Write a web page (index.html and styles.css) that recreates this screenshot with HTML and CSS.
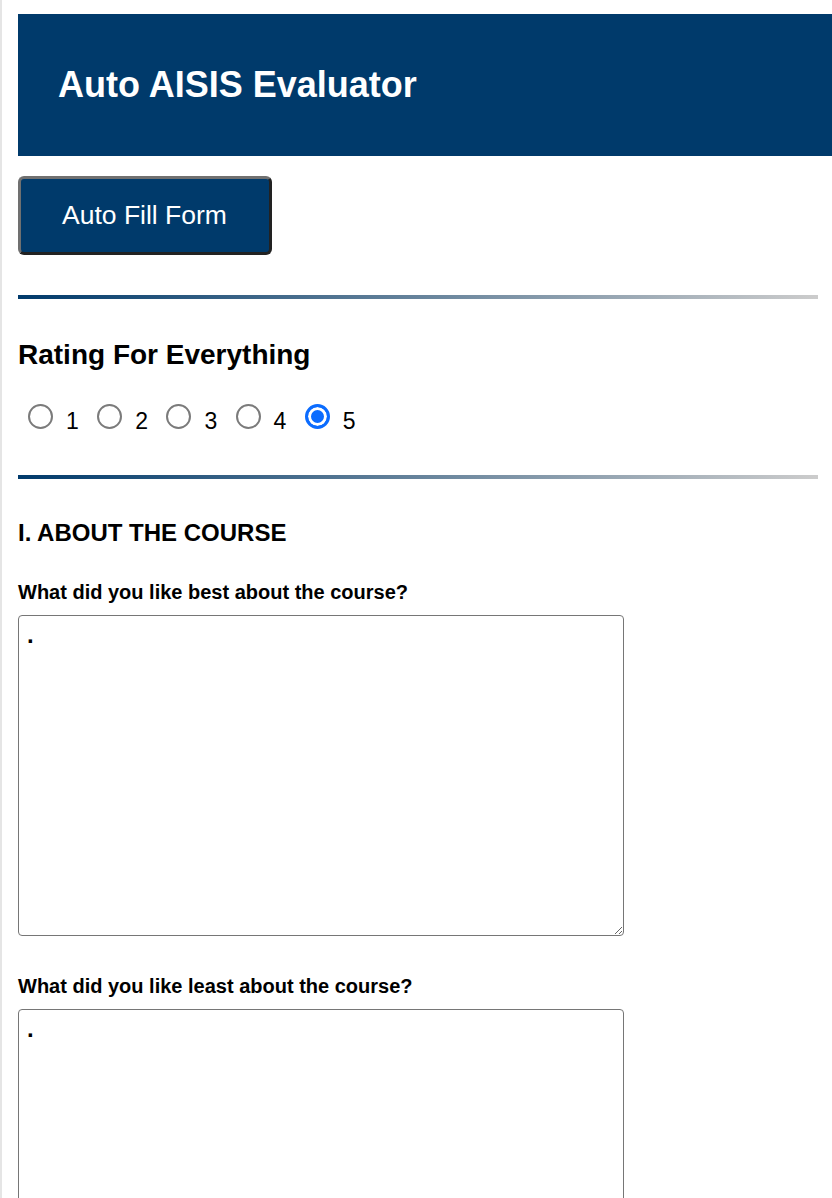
FILE: index.html
```html
<!DOCTYPE html>
<html lang="en">
  <head>
    <meta charset="UTF-8" />
    <meta name="viewport" content="width=device-width, initial-scale=1.0" />
    <title>Auto AISIS Evaluator</title>
    <link rel="stylesheet" href="styles.css">
  </head>
  <body>
    <div class="page">
      <header class="banner">
        <h1>Auto AISIS Evaluator</h1>
      </header>

      <button class="fill-button" type="button">Auto Fill Form</button>

      <hr class="divider" />

      <h2 class="rating-title">Rating For Everything</h2>
      <div class="rating-options">
        <input type="radio" name="rating" id="rate-1" value="1" /><label for="rate-1">1</label>
        <input type="radio" name="rating" id="rate-2" value="2" /><label for="rate-2">2</label>
        <input type="radio" name="rating" id="rate-3" value="3" /><label for="rate-3">3</label>
        <input type="radio" name="rating" id="rate-4" value="4" /><label for="rate-4">4</label>
        <input type="radio" name="rating" id="rate-5" value="5" checked /><label for="rate-5">5</label>
      </div>

      <hr class="divider" />

      <h3 class="section-title">I. ABOUT THE COURSE</h3>

      <label class="question" for="best">What did you like best about the course?</label>
      <textarea class="answer" id="best">.</textarea>

      <label class="question" for="least">What did you like least about the course?</label>
      <textarea class="answer" id="least">.</textarea>
    </div>
  </body>
</html>
```

FILE: styles.css
```css
html {
  overflow-x: hidden;
}
body {
  margin: 0;
  min-height: 100vh;
  border-left: 2px solid #e5e5e5;
  background-color: white;
  color: black;
  font-family: "Liberation Sans", Arial, sans-serif;
}
.page {
  width: 800px;
  padding: 14px 0 0 16px;
}
.banner {
  width: 100%;
  padding: 50px 40px;
  background-color: #003a6b;
}
.banner h1 {
  margin: 0;
  color: white;
  font-size: 36px;
  font-weight: bold;
}
.fill-button {
  display: block;
  margin-top: 20px;
  padding: 21px 42px 21px 41px;
  background-color: #003a6b;
  color: white;
  font-family: "Liberation Sans", Arial, sans-serif;
  font-size: 26.5px;
  line-height: 31px;
  border: 3px solid;
  border-color: #707070 #222 #222 #707070;
  border-radius: 6px;
  cursor: pointer;
}
.divider {
  height: 4px;
  margin: 40px 0;
  border: none;
  background: linear-gradient(to right, #003a6b, #cccccc);
}
.rating-title {
  margin: 0;
  font-size: 28px;
}
.rating-options {
  margin: 33px 0 40px;
  padding-left: 10px;
  font-size: 23px;
}
.rating-options input {
  appearance: none;
  box-sizing: border-box;
  width: 25px;
  height: 25px;
  margin: 0;
  vertical-align: baseline;
  border: 2px solid #7b7b7b;
  border-radius: 50%;
  background-color: white;
}
.rating-options input:checked {
  border: 3px solid #0b6cff;
  background-color: #0b6cff;
  box-shadow: inset 0 0 0 3px white;
}
.rating-options label {
  margin: 0 12px 0 13px;
}
.section-title {
  margin: 0 0 34px;
  font-size: 24px;
}
.question {
  display: block;
  margin-bottom: 11px;
  font-size: 20px;
  font-weight: bold;
}
.answer {
  display: block;
  box-sizing: border-box;
  width: 606px;
  height: 321px;
  margin: 0 0 39px;
  padding: 5px 8px;
  border: 1px solid #767676;
  border-radius: 4px;
  font-family: "Liberation Sans", Arial, sans-serif;
  font-size: 24px;
  font-weight: bold;
}
```
